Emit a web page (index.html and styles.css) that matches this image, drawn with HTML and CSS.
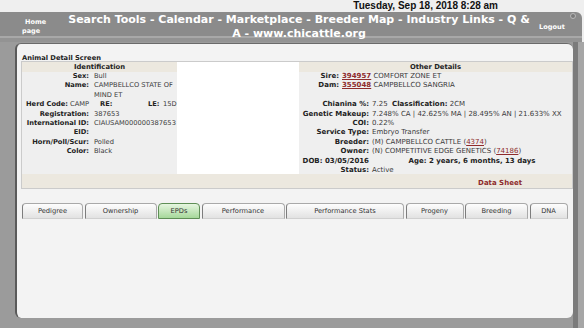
FILE: index.html
```html
<!DOCTYPE html>
<html lang="en">
<head>
    <meta charset="UTF-8">
    <title>Animal Detail Screen</title>
    <link rel="stylesheet" href="styles.css">
</head>
<body>
    <div class="topline"><span class="clock">Tuesday, Sep 18, 2018 8:28 am</span></div>
    <div class="menubar">
        <a class="home-link">Home<br>page</a>
        <div class="menu-links">Search Tools - Calendar - Marketplace - Breeder Map - Industry Links - Q &amp; A - www.chicattle.org</div>
        <a class="logout-link">Logout</a>
        <span class="close-dot"></span>
    </div>
    <div class="frame">
        <div class="panel">
            <div class="caption">Animal Detail Screen</div>
            <div class="detail">
                <div class="head">Identification</div>
                <div class="photo"></div>
                <div class="head">Other Details</div>

                <div class="id-body">
                    <div class="pairs">
                        <b>Sex:</b><span>Bull</span>
                        <b>Name:</b><span>CAMPBELLCO STATE OF MIND ET</span>
                        <div class="herd-row"><b>Herd Code:</b><span>CAMP</span><b>RE:</b><b>LE:</b><span>15D</span></div>
                        <b>Registration:</b><span>387653</span>
                        <b>International ID:</b><span>CIAUSAM000000387653</span>
                        <b>EID:</b><span></span>
                        <b>Horn/Poll/Scur:</b><span>Polled</span>
                        <b>Color:</b><span>Black</span>
                    </div>
                </div>

                <div class="other-body">
                    <div class="pairs parents">
                        <b>Sire:</b><span><a class="link strong">394957</a> COMFORT ZONE ET</span>
                        <b>Dam:</b><span><a class="link strong">355048</a> CAMPBELLCO SANGRIA</span>
                    </div>
                    <div class="blank"></div>
                    <div class="pairs">
                        <b>Chianina %:</b><span>7.25 &nbsp;<b>Classification:</b> 2CM</span>
                        <b>Genetic Makeup:</b><span>7.248% CA | 42.625% MA | 28.495% AN | 21.633% XX</span>
                        <b>COI:</b><span>0.22%</span>
                        <b>Service Type:</b><span>Embryo Transfer</span>
                        <b>Breeder:</b><span>(M) CAMPBELLCO CATTLE (<a class="link">4374</a>)</span>
                        <b>Owner:</b><span>(N) COMPETITIVE EDGE GENETICS (<a class="link">74186</a>)</span>
                        <b>DOB: 03/05/2016</b><b class="age">Age: 2 years, 6 months, 13 days</b>
                        <b>Status:</b><span>Active</span>
                    </div>
                </div>

                <div class="foot"><a>Data Sheet</a></div>
            </div>

            <div class="tabs">
                <div class="tab">Pedigree</div>
                <div class="tab">Ownership</div>
                <div class="tab active">EPDs</div>
                <div class="tab">Performance</div>
                <div class="tab">Performance Stats</div>
                <div class="tab">Progeny</div>
                <div class="tab">Breeding</div>
                <div class="tab">DNA</div>
            </div>
        </div>
    </div>
</body>
</html>
```

FILE: styles.css
```css
body {
    margin: 0;
    background: #efefef;
    font-family: "DejaVu Sans", Verdana, sans-serif;
    color: #3a3a3a;
}

.topline {
    height: 12px;
    display: flex;
    justify-content: flex-end;
    padding-right: 86px;
}

.clock {
    font: bold 10px/12px "Liberation Sans", Arial, sans-serif;
    color: #111;
}

.menubar {
    height: 30px;
    margin-right: 2px;
    display: flex;
    align-items: center;
    color: #fff;
    font-weight: bold;
    border-top-right-radius: 6px;
    background: linear-gradient(to bottom, #8b8b8b 0, #8b8b8b 24px, #a8a8a8 24px, #a8a8a8 26px, #939393 26px);
}

.home-link {
    width: 43px;
    padding-left: 22px;
    font-size: 6.5px;
    line-height: 9px;
    text-indent: 3px;
}

.menu-links {
    width: 468px;
    text-align: center;
    font-size: 11px;
    line-height: 14px;
}

.logout-link {
    margin-left: 6px;
    font-size: 6.6px;
}

.close-dot {
    align-self: flex-start;
    margin: 1px 0 0 5px;
    width: 6px;
    height: 6px;
    box-sizing: border-box;
    border-radius: 50%;
    background: #7a7a7a;
    border: 1px solid #b8b8b8;
}

.frame {
    height: 286px;
    box-sizing: border-box;
    padding: 1px 11px 0 15px;
    background: linear-gradient(to right, #9b9b9b 0, #9b9b9b 573px, #7b7b7b 573px, #7b7b7b 578px, #a6a6a6 578px);
}

.panel {
    height: 275px;
    box-sizing: border-box;
    background: #f3f3f3;
    border-left: 2px solid #5a5a5a;
    border-top: 1px solid #6a6a6a;
    border-radius: 6px;
    padding: 10px 0 0 5px;
}

.caption {
    font-weight: bold;
    font-size: 6.7px;
    line-height: 8px;
    color: #222;
}

.detail {
    width: 550px;
    display: grid;
    grid-template-columns: 155px 122px 273px;
    grid-template-rows: 10px 102px 14px;
    outline: 1px solid #cbcbcb;
    background: #efefef;
}

.head {
    background: #ece8df;
    font-weight: bold;
    text-align: center;
    font-size: 6.8px;
    line-height: 10px;
    color: #222;
}

.photo {
    grid-row: 1 / 3;
    grid-column: 2;
    background: #fff;
}

.id-body {
    font-size: 6.7px;
    line-height: 9.4px;
}

.pairs {
    display: grid;
    grid-template-columns: 67px 1fr;
    column-gap: 5px;
}

.pairs b {
    text-align: right;
    color: #222;
}

.herd-row {
    grid-column: 1 / -1;
    display: grid;
    grid-template-columns: 44px 30px 48px 15px auto;
    padding-left: 4px;
    white-space: nowrap;
}

.herd-row b {
    text-align: left;
}

.other-body {
    font-size: 7px;
    line-height: 9.4px;
}

.other-body .pairs {
    grid-template-columns: 70px 1fr;
    column-gap: 3px;
    white-space: nowrap;
}

.other-body .parents {
    grid-template-columns: 40px 1fr;
}

.pairs span b {
    text-align: left;
}

.pairs .age {
    text-align: center;
}

.blank {
    height: 9.4px;
}

.link {
    color: #8e2b2b;
    text-decoration: underline;
}

.strong {
    font-weight: bold;
}

.foot {
    grid-column: 1 / -1;
    background: #ece8df;
    text-align: right;
    padding: 5px 50px 0 0;
    font-size: 7px;
    line-height: 9px;
}

.foot a {
    color: #8e2b2b;
    font-weight: bold;
}

.tabs {
    margin-top: 15px;
    display: grid;
    grid-template-columns: 61px 72px 42px 83px 118px 58px 63px 38px;
    column-gap: 1.5px;
}

.tab {
    height: 16px;
    box-sizing: border-box;
    border: 1px solid #a9a9a9;
    border-left-color: #7d7d7d;
    border-bottom-color: #d0d0d0;
    border-radius: 4px 4px 0 0;
    background: linear-gradient(#fdfdfd, #e2e2e2);
    text-align: center;
    font-size: 6.7px;
    line-height: 14px;
    color: #333;
}

.tab.active {
    background: linear-gradient(#e6f6e0, #a6d89a);
    border-color: #5f8f56;
    color: #333;
}
```
